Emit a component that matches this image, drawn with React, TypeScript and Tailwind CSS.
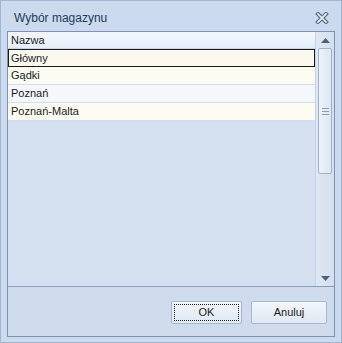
import React from "react";

const rows = [
  { name: "Główny", bg: "bg-[#fbf8ee]", selected: true },
  { name: "Gądki", bg: "bg-[#fcfbf1]" },
  { name: "Poznań", bg: "bg-[#f4f7fc]" },
  { name: "Poznań-Malta", bg: "bg-[#fcfbf1]" },
];

function CloseIcon() {
  return (
    <svg width="14" height="12" viewBox="0 0 14 12">
      <path d="M3 2 L11 10 M11 2 L3 10" stroke="#5d718e" strokeWidth="4" strokeLinecap="square" />
      <path d="M3 2 L11 10 M11 2 L3 10" stroke="#eef2f8" strokeWidth="1.6" strokeLinecap="square" />
    </svg>
  );
}

function Scrollbar() {
  return (
    <div className="w-[19px] flex flex-col bg-gradient-to-r from-[#dfe8f4] to-[#d3dfee] border-l border-[#c5d3e5]">
      <div className="h-[16px] flex items-center justify-center">
        <svg width="9" height="5" viewBox="0 0 9 5">
          <path d="M0 5 L4.5 0 L9 5 Z" fill="#4c5f7c" />
        </svg>
      </div>
      {/* thumb */}
      <div className="mx-[2px] h-[126px] rounded-[2px] border border-[#9fb2cb] bg-gradient-to-r from-[#eef3fa] to-[#dce6f3] flex items-center justify-center">
        <svg width="7" height="7" viewBox="0 0 7 7">
          <path d="M0 0.5 H7 M0 3.5 H7 M0 6.5 H7" stroke="#8a9cb6" strokeWidth="1" />
        </svg>
      </div>
      <div className="flex-1" />
      <div className="h-[16px] flex items-center justify-center">
        <svg width="9" height="5" viewBox="0 0 9 5">
          <path d="M0 0 L9 0 L4.5 5 Z" fill="#4c5f7c" />
        </svg>
      </div>
    </div>
  );
}

export default function App() {
  return (
    <div
      className="w-[342px] h-[343px] bg-[#cbdaed] border border-[#a3b6cf] flex flex-col text-[#1b1b1b]"
      style={{ fontFamily: '"Liberation Sans", Arial, sans-serif' }}
    >
      {/* Title bar */}
      <div className="h-[30px] flex items-center justify-between pl-[13px] pr-[12px]">
        <span className="text-[12px] text-[#1f3a5e] pt-[4px]">Wybór magazynu</span>
        <div className="pt-[3px]">
          <CloseIcon />
        </div>
      </div>

      {/* Client area */}
      <div className="flex-1 ml-[6px] mr-[6px] mb-[5px] border border-[#7e93b1] flex flex-col bg-[#cfdcee]">
        {/* Grid */}
        <div className="h-[255px] flex border-b border-[#8a9dba] bg-[#d4e0f0]">
          <div className="flex-1 flex flex-col text-[11px]">
            <div className="h-[17px] flex items-center pl-[3px] pt-[1px] bg-gradient-to-b from-[#f3f7fc] to-[#e6eef8] border-b border-[#c6d4e6]">
              Nazwa
            </div>
            {rows.map((r) =>
              r.selected ? (
                <div
                  key={r.name}
                  className={`h-[18px] flex items-center pl-[2px] ${r.bg} border border-[#1a1a1a]`}
                >
                  {r.name}
                </div>
              ) : (
                <div
                  key={r.name}
                  className={`h-[18px] flex items-center pl-[3px] ${r.bg} border-b border-[#d3deec]`}
                >
                  {r.name}
                </div>
              )
            )}
          </div>
          <Scrollbar />
        </div>

        {/* Buttons */}
        <div className="flex-1 flex justify-end items-start pt-[14px] pr-[7px] gap-[9px] text-[11px]">
          <button className="w-[71px] h-[23px] rounded-[2px] border border-[#a7b7cd] bg-gradient-to-b from-[#f2f6fb] to-[#dfe8f4] p-[2px]">
            <div className="w-full h-full border border-dotted border-[#222] flex items-center justify-center">
              OK
            </div>
          </button>
          <button className="w-[76px] h-[23px] rounded-[2px] border border-[#a7b7cd] bg-gradient-to-b from-[#f2f6fb] to-[#dfe8f4] flex items-center justify-center">
            Anuluj
          </button>
        </div>
      </div>
    </div>
  );
}
